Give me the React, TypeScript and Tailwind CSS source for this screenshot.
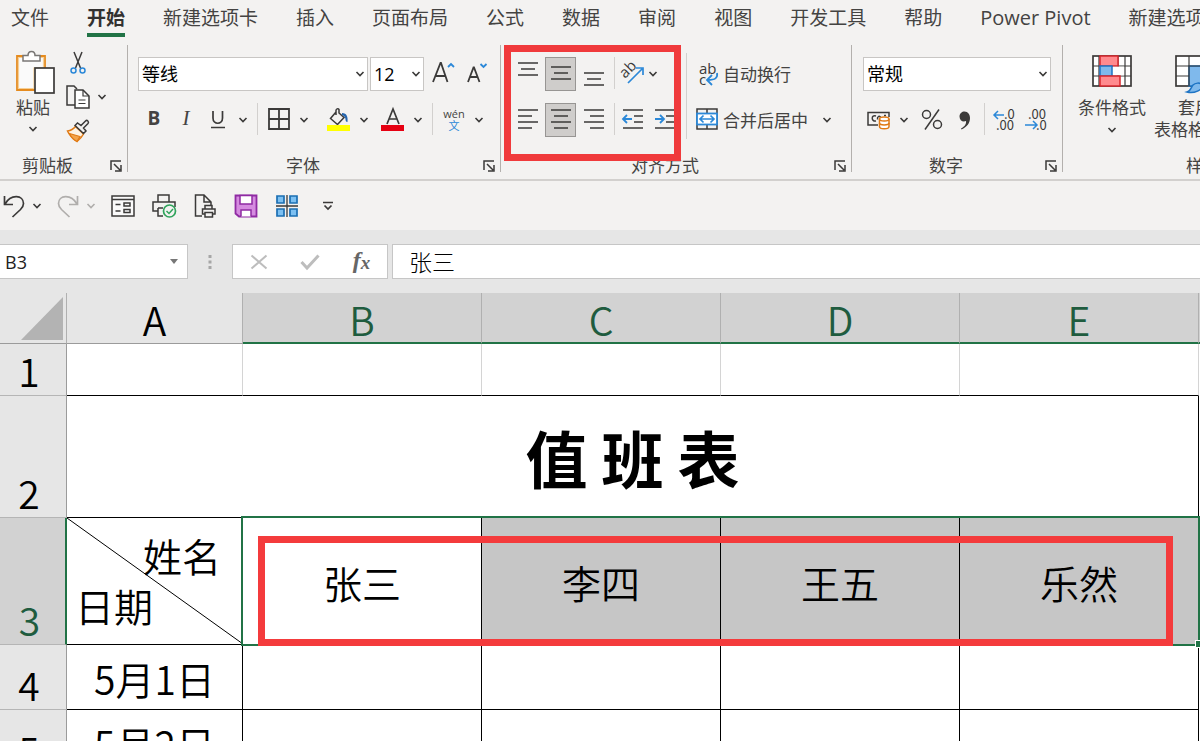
import type { ReactNode } from "react";

const INK = "#3b3a39";
const BLUE = "#2b88d8";

function Icon({ w, h, children }: { w: number; h: number; children: ReactNode }) {
  return (
    <svg
      width={w}
      height={h}
      viewBox={`0 0 ${w} ${h}`}
      fill="none"
      stroke={INK}
      strokeWidth="1.5"
      className="shrink-0 overflow-visible"
      aria-hidden="true"
    >
      {children}
    </svg>
  );
}

function Chevron({ faded = false }: { faded?: boolean }) {
  return (
    <Icon w={10} h={6}>
      <path d="M1.500 1L5 4.500 8.500 1" strokeWidth="1.6" stroke={faded ? "#b0aeac" : INK} />
    </Icon>
  );
}

function Btn({ label, className = "w-8", children }: { label: string; className?: string; children: ReactNode }) {
  return (
    <button type="button" aria-label={label} className={`flex h-[34px] shrink-0 items-center justify-center ${className}`}>
      {children}
    </button>
  );
}

function Drop({ label, faded = false }: { label: string; faded?: boolean }) {
  return (
    <Btn label={label} className="w-[18px]">
      <Chevron faded={faded} />
    </Btn>
  );
}

function Divider() {
  return (
    <div className="flex h-8 w-[11px] shrink-0 justify-center">
      <div className="w-px bg-[#d2d0ce]" />
    </div>
  );
}

function Combo({ label, value, className }: { label: string; value: string; className: string }) {
  return (
    <div className={`relative h-[34px] shrink-0 ${className}`}>
      <select
        aria-label={label}
        defaultValue={value}
        className="h-full w-full appearance-none border border-[#c8c6c4] bg-white px-[3px] text-[18px] text-black outline-none"
      >
        <option>{value}</option>
      </select>
      <span className="pointer-events-none absolute inset-y-0 right-[3px] flex items-center">
        <Chevron />
      </span>
    </div>
  );
}

function Group({
  title,
  launcher = true,
  className = "",
  labelClass = "",
  children,
}: {
  title: string;
  launcher?: boolean;
  className?: string;
  labelClass?: string;
  children: ReactNode;
}) {
  return (
    <section aria-label={title} className={`relative flex shrink-0 flex-col ${className}`}>
      <div className="h-[107px]">{children}</div>
      <div className="flex h-[27px] items-center">
        <span className={`flex-1 text-center text-[17px] leading-none ${labelClass}`}>{title}</span>
        {launcher && (
          <button type="button" aria-label={`${title}设置`} className="flex w-[22px] justify-center">
            <Icon w={12} h={12}>
              <path d="M1 10V1h10M4 4l6 6M11 5v6H5" />
            </Icon>
          </button>
        )}
      </div>
    </section>
  );
}

function GroupLine() {
  return <div className="h-[127px] w-px shrink-0 bg-[#b3b0ad]" />;
}

function Rows({ children }: { children: ReactNode }) {
  return <div className="flex flex-col gap-3 pt-3">{children}</div>;
}

const tabs = [
  "文件",
  "开始",
  "新建选项卡",
  "插入",
  "页面布局",
  "公式",
  "数据",
  "审阅",
  "视图",
  "开发工具",
  "帮助",
  "Power Pivot",
  "新建选项卡",
];

function tabClass(tab: string) {
  if (tab === "开始") {
    return "h-[37px] shrink-0 border-b-4 border-[#217346] text-[19px] font-bold leading-9 text-[#323130]";
  }
  if (tab === "Power Pivot") {
    return "h-[37px] shrink-0 text-[20px] leading-9";
  }
  return "h-[37px] shrink-0 text-[19px] leading-9";
}

function TabBar() {
  return (
    <nav className="flex h-[38px] shrink-0 gap-[38px] overflow-hidden pl-[11px]">
      {tabs.map((tab, i) => (
        <a key={i} href="#" className={tabClass(tab)}>
          {tab}
        </a>
      ))}
    </nav>
  );
}

function ClipboardGroup() {
  return (
    <Group title="剪贴板" className="w-[127px]" labelClass="pr-2.5">
      <div className="flex">
        <button type="button" className="flex w-[66px] flex-col items-center pt-[5px] text-[17px] leading-7">
          <span className="pl-1">
            <Icon w={40} h={44}>
              <path d="M9 6H2v34h18" stroke="#e58b1e" strokeWidth="1.800" />
              <path d="M24 6h6v12" stroke="#e58b1e" strokeWidth="1.800" />
              <path d="M3.500 7.500h25V18H19v20.500H3.500z" fill="#fafafa" stroke="#f6cf95" strokeWidth="1.200" />
              <path d="M8 11V5.500h5c0-5.500 7-5.500 7 0h5V11z" fill="#fff" stroke="#797775" />
              <rect x="20" y="18" width="19" height="25" fill="#fff" strokeWidth="1.700" />
            </Icon>
          </span>
          <span>粘贴</span>
          <span className="pt-1">
            <Chevron />
          </span>
        </button>
        <div className="flex flex-col pt-px">
          <Btn label="剪切" className="w-6">
            <Icon w={16} h={24}>
              <path d="M4 1l6.500 16M12 1L5.500 17" />
              <circle cx="3.500" cy="19.500" r="2.500" stroke={BLUE} />
              <circle cx="12.500" cy="19.500" r="2.500" stroke={BLUE} />
            </Icon>
          </Btn>
          <div className="flex gap-[3px]">
            <Btn label="复制" className="w-6">
              <Icon w={24} h={24}>
                <path d="M9 20H1V1h7l3 3" />
                <path d="M9 5h8l6 6v12H9z" fill="#fff" />
                <path d="M17 5v6h6M12.500 15h7M12.500 18.500h7" strokeWidth="1.200" />
              </Icon>
            </Btn>
            <Drop label="复制选项" />
          </div>
          <Btn label="格式刷" className="w-6">
            <Icon w={24} h={24}>
              <path d="M1.500 12c3.500-.5 6-2 8-4.500l8 7.500c-1.500 3-3.500 5-6.500 7.500C6.500 19.500 3.500 16.500 1.500 12z" fill="#fdf3e4" stroke="#e07a14" />
              <path d="M3.500 14.500l10.500 3-3 5c-4-2-6-4.500-7.500-8z" fill="#f3a44a" stroke="#e07a14" strokeWidth="1.200" />
              <path d="M9 6.500l2.500-2.500 3.500 2.500L19.500 2c1.500-1.500 4 .5 2.500 2.500l-4.500 4.500 2.500 3-2.500 2.500z" fill="#f3f2f1" />
            </Icon>
          </Btn>
        </div>
      </div>
    </Group>
  );
}

function FontGroup() {
  return (
    <Group title="字体" className="w-[372px]">
      <Rows>
        <div className="flex pl-2.5">
          <Combo label="字体名称" value="等线" className="w-[230px]" />
          <Combo label="字号" value="12" className="ml-0.5 w-[54px]" />
          <Btn label="增大字号" className="ml-1 w-[30px]">
            <Icon w={22} h={26}>
              <path d="M1 21L8.500 2h.5l6.500 19M3.500 15h10" strokeWidth="1.800" />
              <path d="M16 6l3-3 3 3" stroke={BLUE} strokeWidth="1.800" />
            </Icon>
          </Btn>
          <Btn label="减小字号" className="ml-1 w-[30px]">
            <Icon w={20} h={26}>
              <path d="M1 21L6.500 6.500h.5L12.500 21M3 16h8" strokeWidth="1.800" />
              <path d="M13.500 3l3 3 3-3" stroke={BLUE} strokeWidth="1.800" />
            </Icon>
          </Btn>
        </div>
        <div className="flex pl-2.5 text-[19px] leading-none">
          <Btn label="加粗" className="w-8 pb-1 font-bold">B</Btn>
          <Btn label="倾斜" className="w-8 pb-1 font-['Liberation_Serif'] text-[21px] italic">I</Btn>
          <Btn label="下划线">
            <Icon w={14} h={20}>
              <path d="M2 1v7c0 7 9.500 7 9.500 0V1" strokeWidth="1.700" />
              <path d="M0 17.500h14" />
            </Icon>
          </Btn>
          <Drop label="下划线选项" />
          <Divider />
          <Btn label="边框">
            <Icon w={22} h={22}>
              <path d="M1 0h20v20H1zM11 0v20M1 10h20" strokeWidth="1.800" />
            </Icon>
          </Btn>
          <Drop label="边框选项" />
          <Btn label="填充颜色" className="ml-2.5 w-8">
            <Icon w={24} h={24}>
              <path d="M9 4l-5.500 6.500 7 6 6.500-7-5-4.500V1.500c-1-1.500-3-.5-3 1V7" />
              <path d="M15 5c5 0 6 4 5.500 9-1.500 0-2-1-2-3-.5-2-1-3-3.500-4z" fill="#2565ae" stroke="none" />
              <rect y="17" width="23" height="6" fill="#ffff00" stroke="none" />
            </Icon>
          </Btn>
          <Drop label="填充颜色选项" />
          <Btn label="字体颜色" className="ml-1 w-8">
            <Icon w={24} h={24}>
              <path d="M6 16L12 1l6 15M8 11h8" strokeWidth="1.700" />
              <rect y="17" width="23" height="6" fill="#e60012" stroke="none" />
            </Icon>
          </Btn>
          <Drop label="字体颜色选项" />
          <Divider />
          <Btn label="拼音" className="w-8 flex-col">
            <span className="text-[11px] leading-3">wén</span>
            <span className="text-[11px] leading-3 text-[#2b88d8]">文</span>
          </Btn>
          <Drop label="拼音选项" />
        </div>
      </Rows>
    </Group>
  );
}

function AlignBtn({ label, d, active = false }: { label: string; d: string; active?: boolean }) {
  return (
    <button
      type="button"
      aria-label={label}
      aria-pressed={active}
      className={
        active
          ? "flex h-[34px] w-[31px] shrink-0 items-center justify-center border border-[#979593] bg-[#cfcdcb]"
          : "flex h-[34px] w-[31px] shrink-0 items-center justify-center"
      }
    >
      <Icon w={22} h={26}>
        <path d={d} strokeWidth="1.600" />
      </Icon>
    </button>
  );
}

function AlignmentGroup() {
  return (
    <Group title="对齐方式" className="w-[350px]">
      <div className="flex">
        <div className="w-[181px] pl-[11px]">
          <Rows>
            <div className="flex">
              <div className="flex gap-0.5">
                <AlignBtn label="顶端对齐" d="M1 2h20M4 8h14M1 14h20" />
                <AlignBtn label="垂直居中" active d="M1 6h20M4 12h14M1 18h20" />
                <AlignBtn label="底端对齐" d="M1 12h20M4 18h14M1 24h20" />
              </div>
              <Divider />
              <Btn label="方向" className="w-6">
                <Icon w={24} h={26}>
                  <text
                    x="5"
                    y="18"
                    transform="rotate(-45 5 18)"
                    className="font-['Open_Sans','Noto_Sans',sans-serif] text-[15px]"
                    fill={INK}
                    stroke="none"
                  >
                    ab
                  </text>
                  <path d="M8 22L22 8M16 7h7v7" stroke={BLUE} strokeWidth="1.700" />
                </Icon>
              </Btn>
              <Drop label="方向选项" />
            </div>
            <div className="flex">
              <div className="flex gap-0.5">
                <AlignBtn label="左对齐" d="M1 3h20M1 9h14M1 15h20M1 21h14" />
                <AlignBtn label="居中" active d="M1 3h20M4 9h14M1 15h20M4 21h14" />
                <AlignBtn label="右对齐" d="M1 3h20M7 9h14M1 15h20M7 21h14" />
              </div>
              <Divider />
              <Btn label="减少缩进" className="w-[26px]">
                <Icon w={22} h={22}>
                  <path d="M1 1h20M12 7h9M12 13h9M1 19h20" />
                  <path d="M10 10H1M5 6l-4 4 4 4" stroke={BLUE} strokeWidth="1.800" />
                </Icon>
              </Btn>
              <Btn label="增加缩进" className="w-[38px]">
                <Icon w={22} h={22}>
                  <path d="M1 1h20M12 7h9M12 13h9M1 19h20" />
                  <path d="M1 10h9M6 6l4 4-4 4" stroke={BLUE} strokeWidth="1.800" />
                </Icon>
              </Btn>
            </div>
          </Rows>
        </div>
        <div className="flex flex-1 pt-2">
          <div className="ml-1 h-[86px] w-px bg-[#d2d0ce]" />
          <div className="flex flex-col gap-3 pt-1 pl-2 text-[17px] leading-none">
            <button type="button" className="flex h-[34px] items-center gap-1">
              <Icon w={24} h={26}>
                <text className="font-['Open_Sans','Noto_Sans',sans-serif] text-[15px]" fill={INK} stroke="none">
                  <tspan x="4" y="13">ab</tspan>
                  <tspan x="4" y="24">c</tspan>
                </text>
                <path d="M22 12c1 5-2 7-9 7M17 14l-5 5 5 5" stroke={BLUE} strokeWidth="1.800" />
              </Icon>
              自动换行
            </button>
            <div className="flex gap-2.5">
              <button type="button" className="flex h-[34px] items-center gap-1">
                <Icon w={24} h={22}>
                  <path d="M2 0h20v20H2zM12 0v20" />
                  <rect x="2" y="4.500" width="20" height="11" fill="#fff" stroke={BLUE} strokeWidth="1.800" />
                  <path d="M5 10h14M8.500 6.500L5 10l3.500 3.500M15.500 6.500L19 10l-3.500 3.500" stroke={BLUE} strokeWidth="1.700" />
                </Icon>
                合并后居中
              </button>
              <Drop label="合并选项" />
            </div>
          </div>
        </div>
      </div>
      <div className="pointer-events-none absolute top-0 left-[3px] h-[116px] w-[177px] border-[7px] border-[#f03a3c]" />
    </Group>
  );
}

function NumberGroup() {
  const digits = "font-['Noto_Sans_CJK_SC',sans-serif] text-[13px]";
  return (
    <Group title="数字" className="w-[210px]">
      <Rows>
        <div className="flex pl-[11px]">
          <Combo label="数字格式" value="常规" className="w-[188px]" />
        </div>
        <div className="flex pl-[11px]">
          <Btn label="会计数字格式">
            <Icon w={24} h={20}>
              <path d="M11 15H1V2.500h21V7M9 6c-5-2-5 6 0 5M14 8.500c-1-4-4-2-3.500 1M19 5.500h-2" />
              <path d="M12.500 9v7.500c0 3 9.500 3 9.500 0V9" fill="#fff" stroke="#e07a14" />
              <ellipse cx="17.250" cy="9" rx="4.750" ry="2" fill="#fff" stroke="#e07a14" />
              <path d="M12.500 13c0 2.500 9.500 2.500 9.500 0" stroke="#e07a14" />
            </Icon>
          </Btn>
          <Drop label="会计格式选项" />
          <Btn label="百分比样式" className="w-[38px]">
            <Icon w={22} h={22}>
              <circle cx="5.500" cy="5.500" r="4" />
              <circle cx="16.500" cy="15.500" r="4" />
              <path d="M18 .5L4 20.500" />
            </Icon>
          </Btn>
          <Btn label="千位分隔样式" className="w-7">
            <Icon w={12} h={20}>
              <path d="M2 18.500c4-2 5.500-5 5-7.500-3 1.500-6.500-.5-6.500-4.500C.5 3.500 3 1.500 5.500 1.500c3.500 0 5.500 3 5.500 6.500 0 5-3 9-8.500 11.500z" fill={INK} stroke="none" />
            </Icon>
          </Btn>
          <Divider />
          <Btn label="增加小数位数" className="w-7">
            <Icon w={24} h={24}>
              <text className={digits} fill={INK} stroke="none">
                <tspan x="12" y="11">.0</tspan>
                <tspan x="4" y="22">.00</tspan>
              </text>
              <path d="M12 7H2M6 3L2 7l4 4" stroke={BLUE} />
            </Icon>
          </Btn>
          <Btn label="减少小数位数" className="w-9">
            <Icon w={24} h={24}>
              <text className={digits} fill={INK} stroke="none">
                <tspan x="4" y="11">.00</tspan>
                <tspan x="12" y="22">.0</tspan>
              </text>
              <path d="M1 17h12M9 13l4 4-4 4" stroke={BLUE} />
            </Icon>
          </Btn>
        </div>
      </Rows>
    </Group>
  );
}

function StylesGroup() {
  return (
    <Group title="样式" launcher={false} className="w-[280px]">
      <div className="flex gap-1.5 pt-2.5 pl-3.5 text-[17px]">
        <button type="button" className="flex w-[70px] flex-col items-center pt-px">
          <Icon w={40} h={38}>
            <rect x="1" y="0" width="38" height="30" fill="#fff" strokeWidth="1.700" />
            <path d="M7 0v30M26 0v30M33 0v30M1 10h38M1 20h38" strokeWidth="1.200" />
            <rect x="8" y="0" width="18" height="10" fill="#ff8a8e" stroke="#d8262c" />
            <rect x="8" y="10" width="12" height="10" fill="#7fb9ec" stroke="#1e74c4" />
            <path d="M21 10.700h11v8.600H21z" fill="#fff" stroke="none" />
            <rect x="8" y="20" width="20" height="10" fill="#ff8a8e" stroke="#d8262c" />
          </Icon>
          <span className="pt-[3px] leading-[22px]">条件格式</span>
          <span className="pt-2 leading-none">
            <Chevron />
          </span>
        </button>
        <button type="button" className="flex w-[84px] flex-col items-center pt-px">
          <Icon w={40} h={38}>
            <rect x="1" y="0" width="38" height="30" fill="#fff" strokeWidth="1.700" />
            <path d="M14 10h25v20H14z" fill="#7fb9ec" stroke="#1e74c4" />
            <path d="M14 0v30M27 0v30M1 10h38M1 20h13" strokeWidth="1.200" />
            <path d="M12 36c4-1 4-5 6-7s7-3 9 0c1 5-8 9-15 7z" fill="#7fb9ec" stroke="#1e74c4" />
          </Icon>
          <span className="pt-[3px] leading-[22px]">套用</span>
          <span className="flex items-center gap-1 leading-[22px] whitespace-nowrap">
            表格格式
            <Chevron />
          </span>
        </button>
      </div>
    </Group>
  );
}

function QuickAccess() {
  return (
    <div className="flex h-[49px] shrink-0 items-center">
      <Btn label="撤消" className="w-7">
        <Icon w={22} h={24}>
          <path d="M1.500 2v8.500H10M2 10C8-.5 20.500 1 20.500 9.500c0 2.500-1 4-3 6L9.500 23" strokeWidth="1.700" />
        </Icon>
      </Btn>
      <Drop label="撤消列表" />
      <Btn label="恢复" className="ml-2 w-7">
        <Icon w={22} h={24}>
          <path d="M20.500 2v8.500H12M20 10C14-.5 1.500 1 1.500 9.500c0 2.500 1 4 3 6l8 7.500" stroke="#b0aeac" strokeWidth="1.700" />
        </Icon>
      </Btn>
      <Drop label="恢复列表" faded />
      <div className="flex pl-0.5">
        <Btn label="表单" className="w-[41px]">
          <Icon w={24} h={22}>
            <rect x="1" y="1" width="22" height="20" fill="#fafafa" />
            <path d="M1 4.500h22M4.500 9.500h5M4.500 16h5M13 8h6v3h-6zM13 14.500h6v3h-6z" />
          </Icon>
        </Btn>
        <Btn label="快速打印" className="w-[41px]">
          <Icon w={24} h={24}>
            <path d="M6 8V1h11v7M6 17H1V8h22v5M6 14v8h5M6 14h5" />
            <circle cx="17.500" cy="17" r="6" fill="#f3f2f1" stroke="#2fa35b" strokeWidth="1.700" />
            <path d="M14.500 17l2.500 2.500 4-4.500" stroke="#2fa35b" />
          </Icon>
        </Btn>
        <Btn label="打印预览" className="w-[41px]">
          <Icon w={22} h={24}>
            <path d="M8 22H1.500V1H10l7 7v3M10 1v7h7" />
            <path d="M11 15v-3.500h7V15M11 20H8.500v-5H21v5h-2.500M11 18.500h7.500V23H11z" />
          </Icon>
        </Btn>
        <Btn label="保存" className="w-[41px]">
          <Icon w={24} h={24}>
            <path d="M1.500 1.500h21v21H5l-3.500-3z" fill="#d58be0" stroke="#8f2ba3" strokeWidth="1.800" />
            <path d="M6 1.500h12v8.500H6zM7 22.500V16h10v6.500" fill="#fff" stroke="#8f2ba3" />
          </Icon>
        </Btn>
        <Btn label="窗格" className="w-[41px]">
          <Icon w={24} h={24}>
            <path d="M2 2h7v7H2zM15 2h7v7h-7zM2 15h7v7H2zM15 15h7v7h-7z" fill="#7cc0f2" stroke="#1b6fb3" strokeWidth="1.700" />
            <path d="M12 1v22M1 12h22" strokeWidth="1.300" />
          </Icon>
        </Btn>
        <Btn label="自定义快速访问工具栏" className="w-[41px]">
          <Icon w={12} h={10}>
            <path d="M1 1.500h10M2.500 4.500L6 8l3.500-3.500" strokeWidth="1.700" />
          </Icon>
        </Btn>
      </div>
    </div>
  );
}

function FormulaBar() {
  return (
    <div className="flex h-[63px] shrink-0 items-start bg-[#e6e6e6] pt-3.5">
      <div className="relative h-[35px] w-[188px] shrink-0">
        <input
          aria-label="名称框"
          defaultValue="B3"
          className="h-full w-full border border-l-0 border-[#c6c6c6] bg-white pl-[5px] text-[18px] text-[#222] outline-none"
        />
        <span className="pointer-events-none absolute inset-y-0 right-2.5 flex items-center">
          <Icon w={8} h={5}>
            <path d="M0 0h8L4 5z" fill="#777" stroke="none" />
          </Icon>
        </span>
      </div>
      <div className="flex h-[35px] w-11 shrink-0 items-center justify-center">
        <Icon w={4} h={16}>
          <path d="M.5 1h3v3h-3zM.5 6.500h3v3h-3zM.5 12h3v3h-3z" fill="#a6a6a6" stroke="none" />
        </Icon>
      </div>
      <div className="flex h-[35px] w-[156px] shrink-0 border border-[#c6c6c6] bg-white">
        <Btn label="取消" className="w-[51px]">
          <Icon w={18} h={16}>
            <path d="M1.500 1.500l15 13M16.500 1.500l-15 13" stroke="#bdbdbd" strokeWidth="2" />
          </Icon>
        </Btn>
        <Btn label="输入" className="w-[52px]">
          <Icon w={20} h={16}>
            <path d="M1.500 8l5.500 6L18.500 1.500" stroke="#bdbdbd" strokeWidth="3" />
          </Icon>
        </Btn>
        <Btn label="插入函数" className="w-[51px] font-['Liberation_Serif'] leading-none font-bold text-[#666] italic">
          <span className="pb-1 text-[24px]">f</span>
          <span className="text-[19px]">x</span>
        </Btn>
      </div>
      <input
        aria-label="编辑栏"
        defaultValue="张三"
        className="ml-1 h-[35px] min-w-0 flex-1 border border-r-0 border-[#c6c6c6] bg-white pb-0.5 pl-4 text-[23px] font-light text-black outline-none"
      />
    </div>
  );
}

const columns = ["B", "C", "D", "E"];
const names = ["张三", "李四", "王五", "乐然"];

function RowHead({ n, selected = false }: { n: number; selected?: boolean }) {
  return (
    <th
      scope="row"
      className={
        selected
          ? "border-r-2 border-b border-r-[#217346] border-b-[#b5b5b5] bg-[#d2d2d2] pt-0 pr-1.5 pb-[5px] pl-0 align-bottom font-[350] text-[#1f5c3f]"
          : "border-r border-b border-r-[#9b9b9b] border-b-[#b5b5b5] bg-[#e6e6e6] pt-0 pr-2 pb-[5px] pl-0 align-bottom font-[350] text-black"
      }
    >
      {n}
    </th>
  );
}

function Sheet() {
  return (
    <div className="relative min-h-0 flex-1 overflow-hidden bg-white">
      <table className="w-full min-w-[1200px] table-fixed border-separate border-spacing-0 text-center font-['Noto_Sans_CJK_SC',sans-serif] text-[39px] leading-none font-[350] text-black">
        <colgroup>
          <col className="w-[67px]" />
          <col className="w-[176px]" />
          <col className="w-[239px]" />
          <col className="w-[239px]" />
          <col className="w-[239px]" />
          <col className="w-[239px]" />
          <col />
        </colgroup>
        <thead>
          <tr className="h-[51px]">
            <th className="border-r border-b border-r-[#b0b0b0] border-b-[#9b9b9b] bg-[#e6e6e6] p-0">
              <span className="flex justify-end pr-[3px]">
                <Icon w={42} h={43}>
                  <path d="M42 0v43H0z" fill="#b3b3b3" stroke="none" />
                </Icon>
              </span>
            </th>
            <th scope="col" className="border-r border-b border-r-[#b0b0b0] border-b-[#9b9b9b] bg-[#e6e6e6] p-0 pt-0.5 font-[350]">
              A
            </th>
            {columns.map((c) => (
              <th
                key={c}
                scope="col"
                className="border-r border-b-2 border-r-[#b0b0b0] border-b-[#217346] bg-[#d2d2d2] p-0 pt-[3px] font-[350] text-[#1f5c3f]"
              >
                {c}
              </th>
            ))}
            <th className="border-b-2 border-[#217346] bg-[#d2d2d2] p-0" />
          </tr>
        </thead>
        <tbody>
          <tr className="h-[52px]">
            <RowHead n={1} />
            {["A", ...columns].map((c) => (
              <td key={c} className="border-r border-b border-r-[#d4d4d4] border-b-black p-0" />
            ))}
            <td />
          </tr>
          <tr className="h-[122px]">
            <RowHead n={2} />
            <td colSpan={5} className="border-r border-b border-black p-0 text-[62px] font-bold">
              值 班 表
            </td>
            <td />
          </tr>
          <tr className="h-[127px]">
            <RowHead n={3} selected />
            <td className="relative border-b border-black p-0 pb-0.5 leading-[50px]">
              <svg className="absolute inset-0 h-full w-full" viewBox="0 0 176 126" preserveAspectRatio="none" aria-hidden="true">
                <path d="M0 0l176 126" stroke="#000" strokeWidth="1" />
              </svg>
              <div className="pr-[22px] text-right">姓名</div>
              <div className="pl-2 text-left">日期</div>
            </td>
            {names.map((name, i) => (
              <td
                key={name}
                className={
                  i === 0
                    ? "border-r border-b border-black bg-white p-0 pt-0.5"
                    : "border-r border-b border-black bg-[#c6c6c6] p-0 pt-0.5"
                }
              >
                {name}
              </td>
            ))}
            <td />
          </tr>
          {[4, 5].map((n) => (
            <tr key={n} className="h-[65px]">
              <RowHead n={n} />
              <td className="border-r border-b border-black p-0 pt-0.5">{`5月${n - 3}日`}</td>
              {columns.map((c) => (
                <td key={c} className="border-r border-b border-black p-0" />
              ))}
              <td />
            </tr>
          ))}
        </tbody>
      </table>
      <div className="pointer-events-none absolute top-[223px] left-[241px] h-[130px] w-[959px] border-2 border-[#217346]">
        <div className="absolute -right-[2px] -bottom-[3px] h-1.5 w-1 bg-[#217346] outline-1 outline-white" />
      </div>
      <div className="pointer-events-none absolute top-[243px] left-[258px] h-[110px] w-[915px] border-[7px] border-[#f43b3c]" />
    </div>
  );
}

export default function App() {
  return (
    <div className="flex h-screen flex-col overflow-hidden bg-[#f3f2f1] font-['Open_Sans','Noto_Sans_CJK_SC',sans-serif] text-[#444342]">
      <TabBar />
      <div className="flex shrink-0 overflow-hidden border-b-2 border-[#d2d0ce] pt-[7px]">
        <ClipboardGroup />
        <GroupLine />
        <FontGroup />
        <GroupLine />
        <AlignmentGroup />
        <GroupLine />
        <NumberGroup />
        <GroupLine />
        <StylesGroup />
      </div>
      <QuickAccess />
      <FormulaBar />
      <Sheet />
    </div>
  );
}
